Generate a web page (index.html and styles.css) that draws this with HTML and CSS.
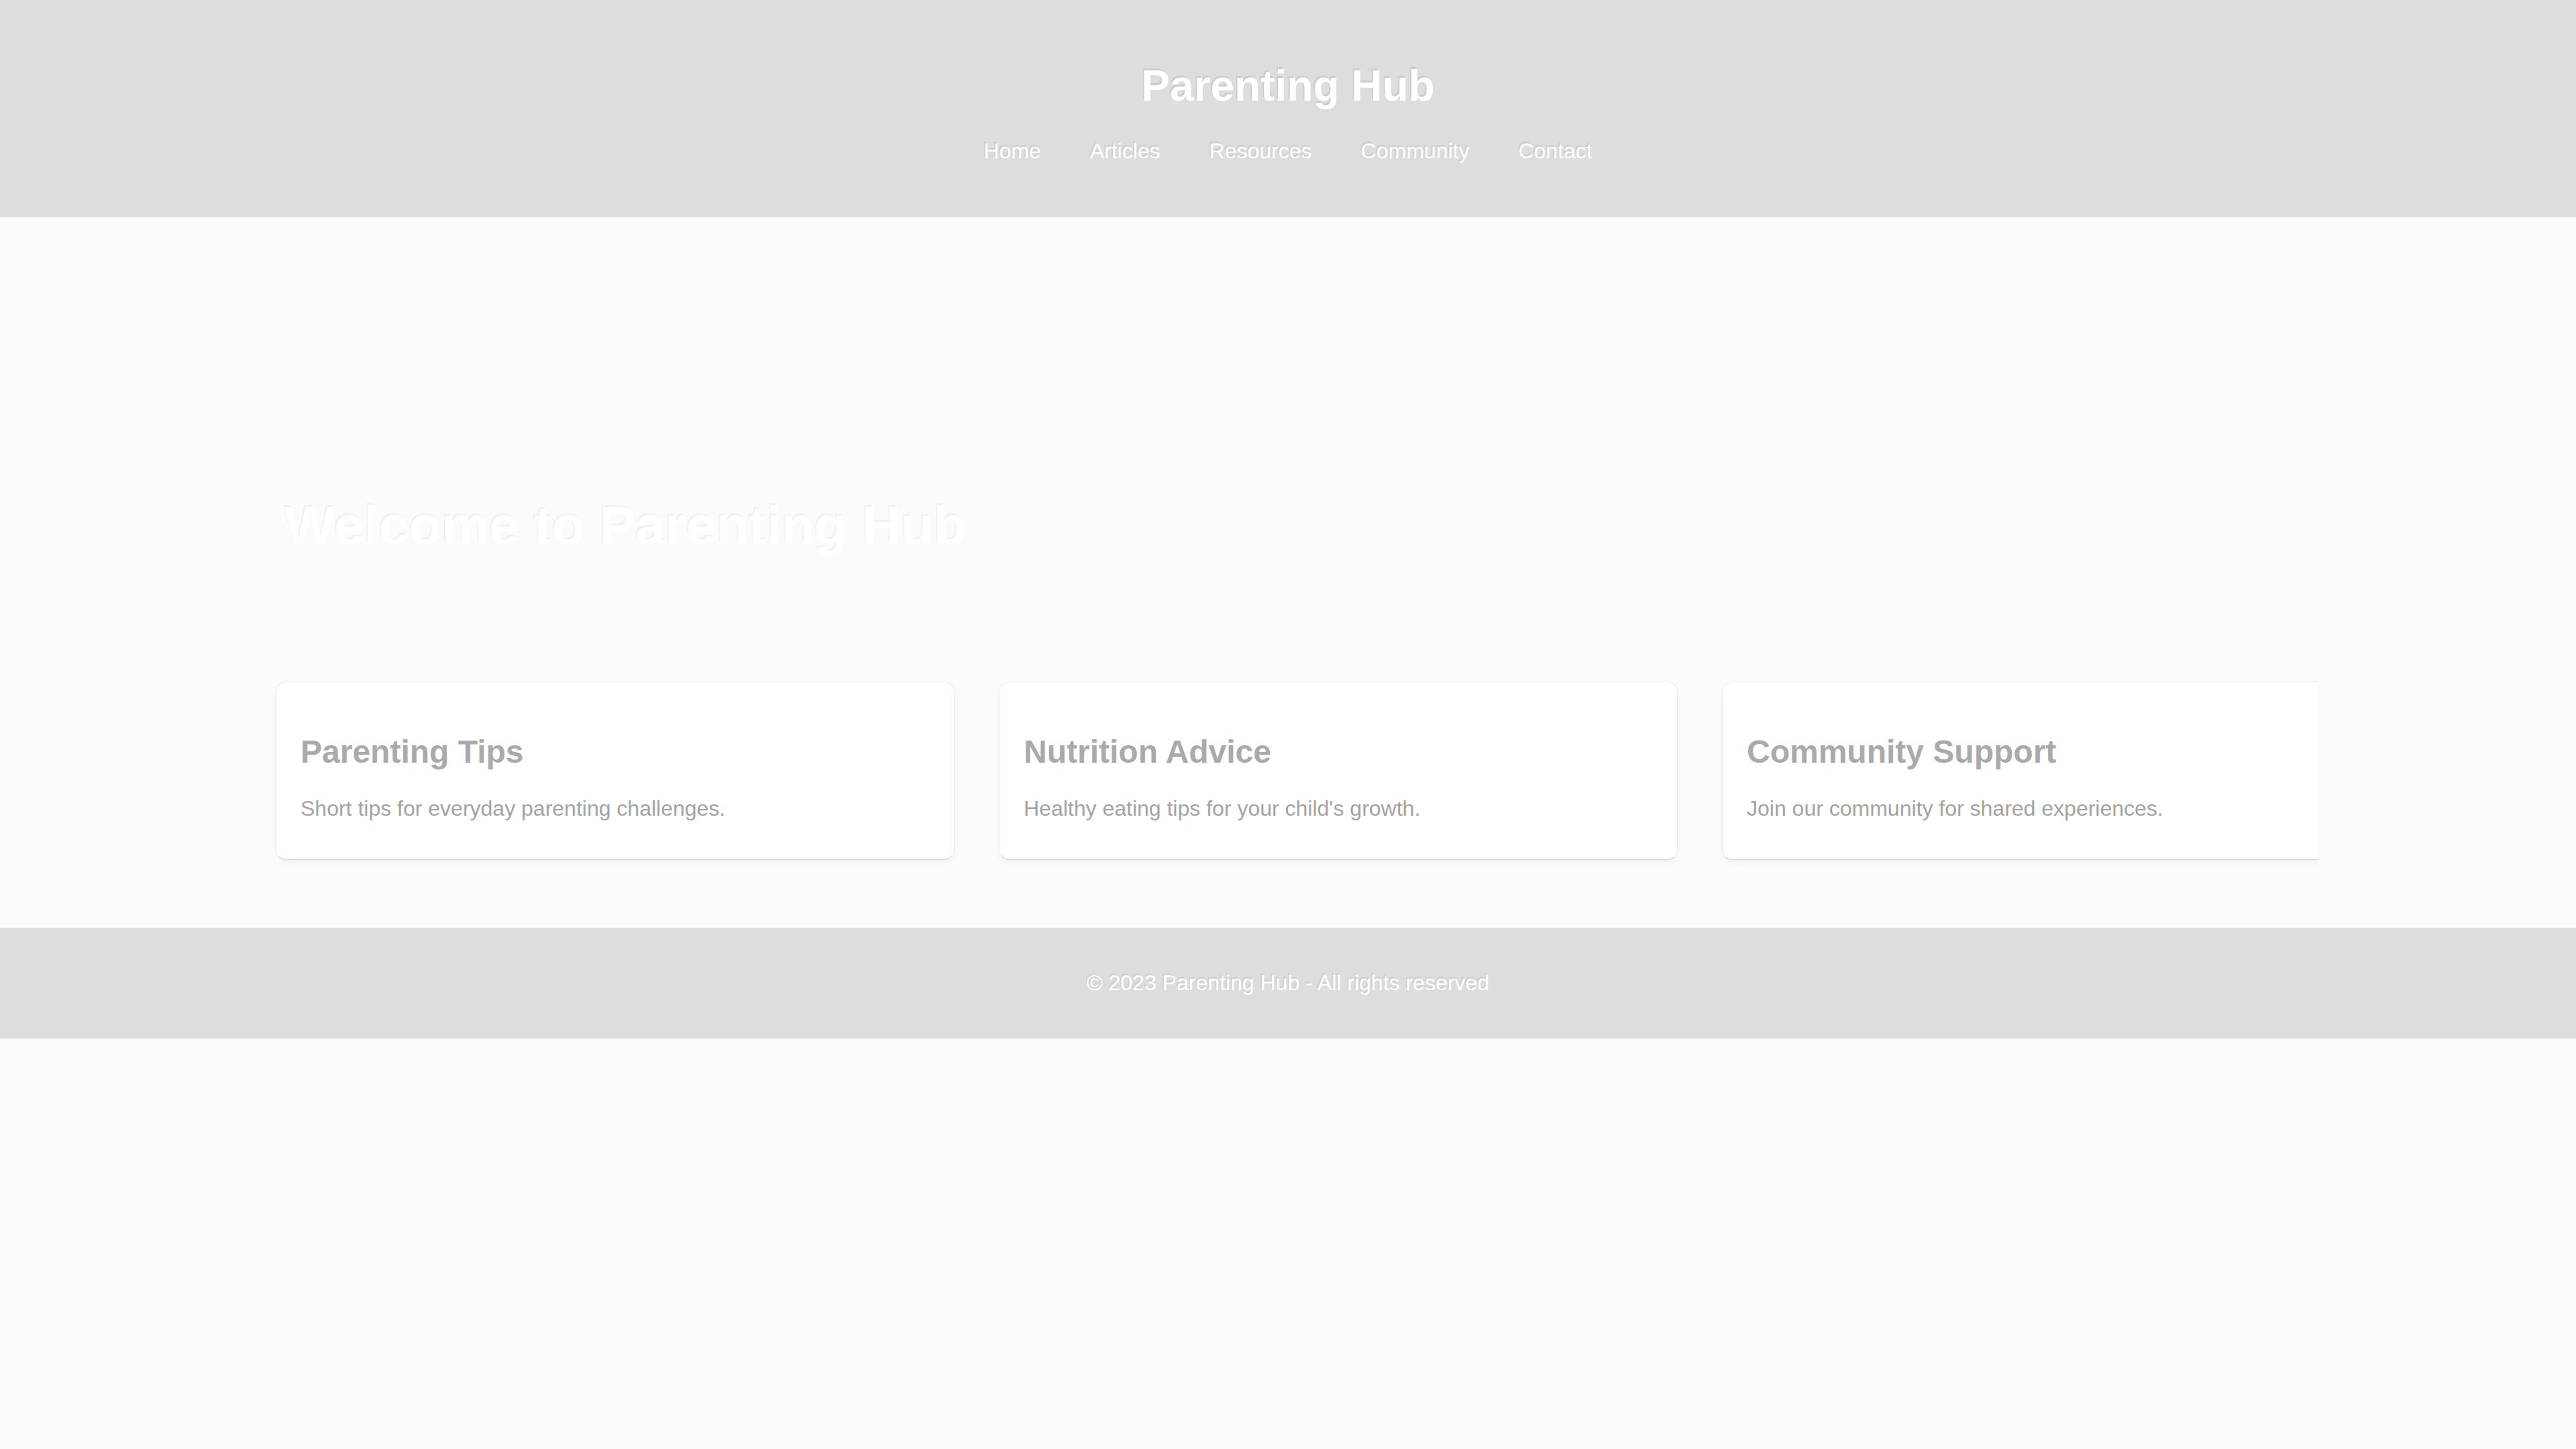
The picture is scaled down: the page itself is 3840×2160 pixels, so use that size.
FILE: index.html
```html
<!DOCTYPE html>
<html lang="en">
<head>
<meta charset="utf-8">
<title>Parenting Hub</title>
<link rel="stylesheet" href="styles.css">
</head>
<body>
<header class="site-header">
  <h1 class="site-title">Parenting Hub</h1>
  <nav class="site-nav">
    <a href="#" class="nav-link">Home</a>
    <a href="#" class="nav-link">Articles</a>
    <a href="#" class="nav-link">Resources</a>
    <a href="#" class="nav-link">Community</a>
    <a href="#" class="nav-link">Contact</a>
  </nav>
</header>
<main class="main">
  <section class="hero">
    <h2 class="hero-title">Welcome to Parenting Hub</h2>
  </section>
  <section class="cards">
    <article class="card">
      <h3 class="card-title">Parenting Tips</h3>
      <p class="card-text">Short tips for everyday parenting challenges.</p>
    </article>
    <article class="card">
      <h3 class="card-title">Nutrition Advice</h3>
      <p class="card-text">Healthy eating tips for your child's growth.</p>
    </article>
    <article class="card">
      <h3 class="card-title">Community Support</h3>
      <p class="card-text">Join our community for shared experiences.</p>
    </article>
  </section>
</main>
<footer class="site-footer">
  <p class="footer-text">© 2023 Parenting Hub - All rights reserved</p>
</footer>
</body>
</html>
```
FILE: styles.css
```css
* { box-sizing: border-box; }

html, body {
  margin: 0;
  padding: 0;
  background: #fbfbfb;
  font-family: "Liberation Sans", Arial, sans-serif;
}

.site-header {
  background: #dddddd;
  text-align: center;
  padding: 91px 0 80px;
}

.site-title {
  margin: 0 0 42px;
  font-size: 64px;
  line-height: 74px;
  font-weight: bold;
  color: #ffffff;
  text-shadow: -2px -3px 0 rgba(0, 0, 0, 0.07);
}

.site-nav {
  display: flex;
  justify-content: center;
  gap: 73px;
  line-height: 37px;
}

.nav-link {
  font-size: 32px;
  color: #ffffff;
  text-decoration: none;
  text-shadow: -2px -3px 0 rgba(0, 0, 0, 0.07);
}

.main {
  width: 80%;
  margin: 0 auto;
  overflow: hidden;
}

.hero {
  padding: 414px 40px 186px;
}

.hero-title {
  margin: 0;
  font-size: 80px;
  line-height: 92px;
  font-weight: bold;
  color: #ffffff;
  text-shadow: -2px -3px 0 rgba(0, 0, 0, 0.04);
}

.cards {
  display: flex;
  gap: 66px;
  padding: 0 0 101px 27px;
}

.card {
  flex: 0 0 1012px;
  background: #ffffff;
  border: 1px solid #ececec;
  border-bottom-color: #cfcfcf;
  border-radius: 16px;
  box-shadow: 0 4px 8px rgba(0, 0, 0, 0.04);
  padding: 76px 36px 57px;
}

.card-title {
  margin: 0 0 39px;
  font-size: 48px;
  line-height: 55px;
  font-weight: bold;
  color: #aaaaaa;
}

.card-text {
  margin: 0;
  font-size: 32px;
  line-height: 37px;
  color: #a3a3a3;
}

.site-footer {
  background: #dddddd;
  text-align: center;
  padding: 64px 0 65px;
}

.footer-text {
  margin: 0;
  font-size: 32px;
  line-height: 36px;
  color: #ffffff;
  text-shadow: -2px -3px 0 rgba(0, 0, 0, 0.07);
}
```
